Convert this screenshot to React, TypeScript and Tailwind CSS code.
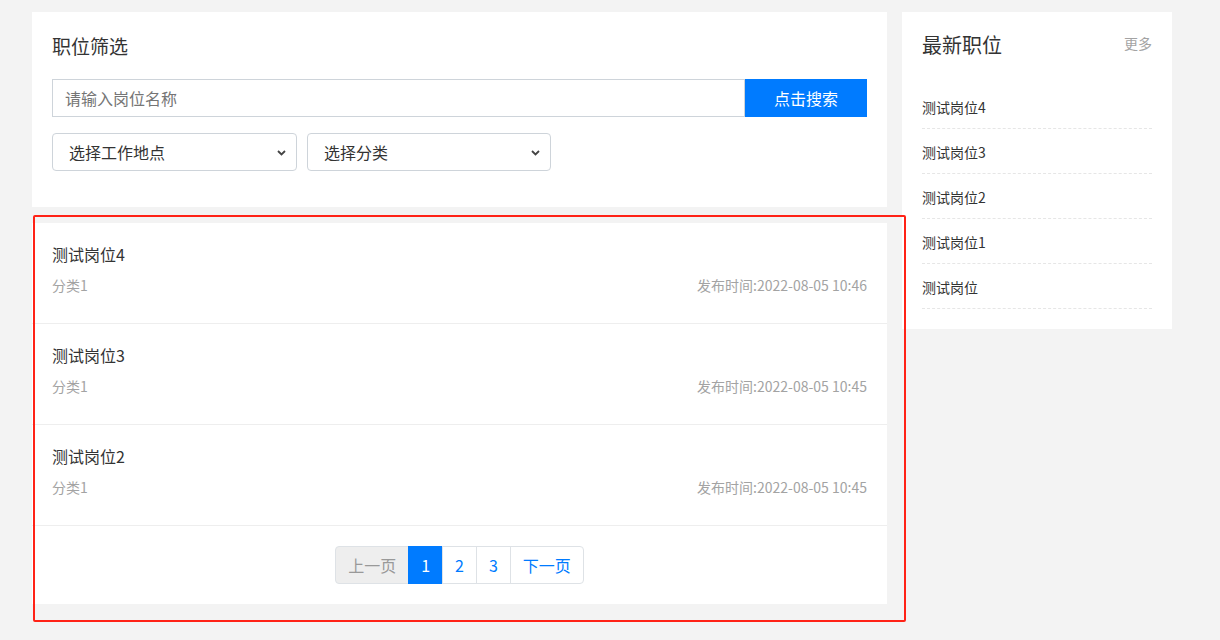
const font = { fontFamily: '"Noto Sans CJK SC", "Noto Sans", sans-serif' }

const jobs = [
  { title: '测试岗位4', cate: '分类1', time: '2022-08-05 10:46' },
  { title: '测试岗位3', cate: '分类1', time: '2022-08-05 10:45' },
  { title: '测试岗位2', cate: '分类1', time: '2022-08-05 10:45' },
]

const latest = ['测试岗位4', '测试岗位3', '测试岗位2', '测试岗位1', '测试岗位']

function Chevron() {
  return (
    <svg width="9" height="6" viewBox="0 0 9 6" className="absolute right-[10px] top-[16px]">
      <path d="M1 1l3.5 3.5L8 1" fill="none" stroke="#444" strokeWidth="1.8" />
    </svg>
  )
}

function FakeSelect({ label, w }: { label: string; w: string }) {
  return (
    <div className={`relative h-[38px] ${w} rounded-[4px] border border-[#ced4da] bg-white pl-[16px] text-[16px] leading-[36px] text-[#333]`}>
      {label}
      <Chevron />
    </div>
  )
}

export default function App() {
  return (
    <div className="min-h-[640px] bg-[#f3f3f3] pl-[32px] pt-[12px]" style={font}>
      <div className="flex gap-[15px]">
        {/* left column */}
        <div className="flex w-[855px] flex-col gap-[16px]">
          {/* filter */}
          <div className="bg-white p-[20px] pb-[36px]">
            <h3 className="h-[28px] text-[19px] leading-[28px] text-[#333]">职位筛选</h3>
            <div className="mt-[19px] flex h-[38px]">
              <input
                type="text"
                placeholder="请输入岗位名称"
                className="h-[38px] flex-1 border border-[#ced4da] px-[12px] text-[16px] text-[#333] outline-0 placeholder:text-[#757575]"
              />
              <button className="h-[38px] w-[122px] bg-[#007bff] text-[16px] text-white">点击搜索</button>
            </div>
            <div className="mt-[16px] flex gap-[10px]">
              <FakeSelect label="选择工作地点" w="w-[245px]" />
              <FakeSelect label="选择分类" w="w-[244px]" />
            </div>
          </div>

          {/* list */}
          <div className="relative">
            <div className="bg-white">
              {jobs.map((j) => (
                <div key={j.title} className="border-b border-[#eeeeee] px-[20px] pt-[18px] pb-[27px]">
                  <div className="h-[26px] text-[16px] leading-[26px] text-[#333]">{j.title}</div>
                  <div className="mt-[7px] flex justify-between text-[14px] leading-[22px] text-[#a3a3a3]">
                    <span>{j.cate}</span>
                    <span>发布时间:{j.time}</span>
                  </div>
                </div>
              ))}
              <div className="flex justify-center pt-[20px] pb-[20px]">
                <div className="flex h-[38px] text-[16px] leading-[36px]">
                  <span className="rounded-l-[4px] border border-[#dee2e6] bg-[#eeeeee] px-[12px] text-[#999]">上一页</span>
                  <span className="-ml-px border border-[#007bff] bg-[#007bff] px-[12px] text-white">1</span>
                  <span className="-ml-px border border-[#dee2e6] px-[12px] text-[#007bff]">2</span>
                  <span className="-ml-px border border-[#dee2e6] px-[12px] text-[#007bff]">3</span>
                  <span className="-ml-px rounded-r-[4px] border border-[#dee2e6] px-[12px] text-[#007bff]">下一页</span>
                </div>
              </div>
            </div>
            {/* highlight box */}
            <div className="pointer-events-none absolute -top-[8px] left-[1px] -right-[19px] -bottom-[18px] rounded-[2px] border-2 border-[#ff2216]" />
          </div>
        </div>

        {/* sidebar */}
        <div className="h-fit w-[270px] bg-white px-[20px] pb-[20px]">
          <div className="flex h-[72px] items-start justify-between pt-[19px]">
            <h3 className="text-[20px] leading-[28px] text-[#333]">最新职位</h3>
            <span className="text-[14px] leading-[24px] text-[#a3a3a3]">更多</span>
          </div>
          <ul>
            {latest.map((t) => (
              <li key={t} className="flex h-[45px] items-center border-b border-dashed border-[#e6e6e6] pt-[2px] text-[14px] text-[#333]">
                {t}
              </li>
            ))}
          </ul>
        </div>
      </div>
    </div>
  )
}
